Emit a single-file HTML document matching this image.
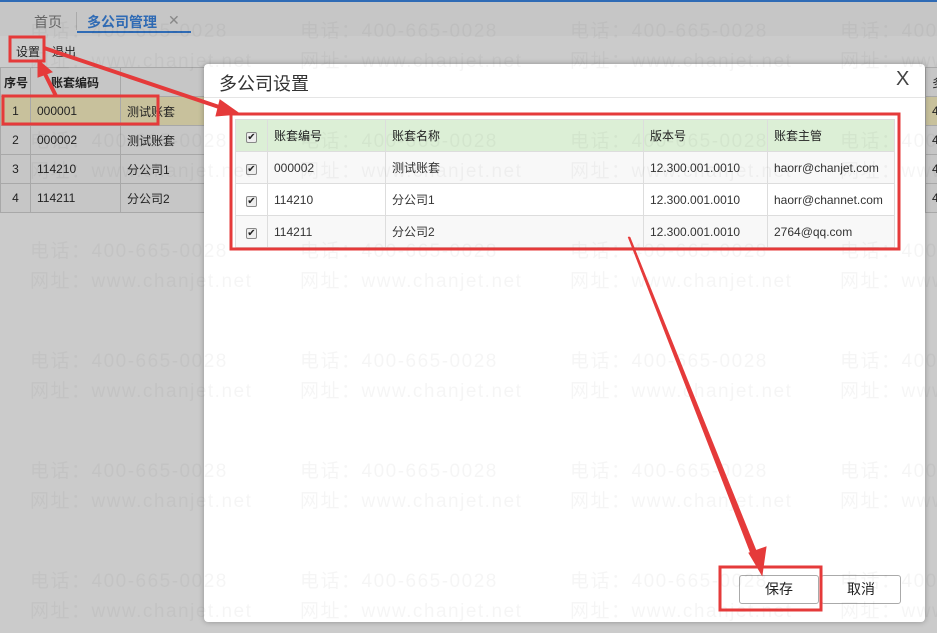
<!DOCTYPE html>
<html><head><meta charset="utf-8"><style>
*{margin:0;padding:0;box-sizing:border-box}
body{width:937px;height:633px;overflow:hidden;background:#cbcbcb;font-family:"Liberation Sans","Noto Sans CJK SC",sans-serif;font-size:12px;color:#222;position:relative}
.abs{position:absolute}
.topbar{left:0;top:0;width:937px;height:36px;background:#c6c6c6;border-top:2px solid #2f6bb5}
.tab{top:12px;font-size:14px;color:#666}
.lt td{border:1px solid #a8a8a8;height:29px;padding-left:6px;font-size:12px;overflow:hidden;white-space:nowrap}
.lt{border-collapse:collapse;position:absolute;left:0;top:67px;background:#c6c6c6;table-layout:fixed;width:1000px}
.modal{left:204px;top:64px;width:721px;height:558px;background:#fff;border-radius:4px;box-shadow:0 0 6px rgba(0,0,0,.3)}
.mt{border-collapse:collapse;position:absolute;left:31px;top:55px;width:660px}
.mt td{border:1px solid #ddd;height:32px;padding-left:6px;font-size:12px;color:#333}
.mt tr.h td{background:#dcefd6;color:#222}
.mt tr:nth-child(even) td{background:#f8f8f8}
.cb{display:inline-block;width:11px;height:11px;border:1px solid #888;border-radius:2px;background:#eee;font-size:10px;line-height:9px;text-align:center;color:#222}
.btn{top:511px;height:29px;border:1px solid #aaa;border-radius:3px;background:#fff;font-size:14px;text-align:center;line-height:27px;color:#222}
.wm{position:absolute;font-size:19px;color:rgba(0,0,0,.04);white-space:nowrap;letter-spacing:1.5px}
</style></head><body>
<div class="abs topbar"></div>
<div class="abs tab" style="left:34px">首页</div>
<div class="abs" style="left:76px;top:12px;width:1px;height:18px;background:#aaa"></div>
<div class="abs tab" style="left:87px;color:#2f6bb5;font-weight:bold">多公司管理</div>
<div class="abs tab" style="left:168px;color:#888">✕</div>
<div class="abs" style="left:77px;top:31px;width:114px;height:2px;background:#2f6bb5"></div>
<div class="abs" style="left:16px;top:43px;font-size:12px">设置</div>
<div class="abs" style="left:52px;top:43px;font-size:12px">退出</div>
<table class="lt">
<tr><td style="width:30px;padding-left:3px;font-weight:bold">序号</td><td style="width:90px;font-weight:bold;padding-left:20px">账套编码</td><td style="width:805px"></td><td>多</td></tr>
<tr style="background:#c8c19c"><td style="text-align:center;padding:0">1</td><td>000001</td><td>测试账套</td><td>42</td></tr>
<tr><td style="text-align:center;padding:0">2</td><td>000002</td><td>测试账套</td><td>42</td></tr>
<tr><td style="text-align:center;padding:0">3</td><td>114210</td><td>分公司1</td><td>42</td></tr>
<tr><td style="text-align:center;padding:0">4</td><td>114211</td><td>分公司2</td><td>42</td></tr>
</table>
<div class="abs modal">
<div class="abs" style="left:15px;top:6px;font-size:18px;color:#333">多公司设置</div>
<div class="abs" style="left:692px;top:4px;font-size:20px;color:#444">X</div>
<div class="abs" style="left:0;top:33px;width:721px;height:1px;background:#e5e5e5"></div>
<table class="mt">
<tr class="h"><td style="width:32px;text-align:center;padding:0"><span class="cb">✔</span></td><td style="width:118px">账套编号</td><td style="width:258px">账套名称</td><td style="width:124px">版本号</td><td>账套主管</td></tr>
<tr><td style="text-align:center;padding:0"><span class="cb">✔</span></td><td>000002</td><td>测试账套</td><td>12.300.001.0010</td><td>haorr@chanjet.com</td></tr>
<tr><td style="text-align:center;padding:0"><span class="cb">✔</span></td><td>114210</td><td>分公司1</td><td>12.300.001.0010</td><td>haorr@channet.com</td></tr>
<tr><td style="text-align:center;padding:0"><span class="cb">✔</span></td><td>114211</td><td>分公司2</td><td>12.300.001.0010</td><td>2764@qq.com</td></tr>
</table>
<div class="abs btn" style="left:535px;width:80px">保存</div>
<div class="abs btn" style="left:617px;width:80px">取消</div>
</div>
<div id="wm"></div>
<svg class="abs" style="left:0;top:0" width="937" height="633">
<g fill="none" stroke="#e53a3a" stroke-width="3">
<rect x="10" y="37" width="34" height="24"/>
<rect x="3" y="96" width="155" height="28"/>
<rect x="231" y="114" width="668" height="135"/>
<rect x="720" y="567" width="101" height="43"/>
</g>
<g stroke="#e53a3a" fill="#e53a3a">
<line x1="56" y1="96" x2="44" y2="72" stroke-width="4"/>
<polygon points="38,60 52,72 38,77"/>
<line x1="44" y1="48" x2="222" y2="108" stroke-width="4"/>
<polygon points="240,114 220,100 216,116"/>
<polygon points="628,237 630,237 758,555 752,557" stroke-width="0.5"/>
<polygon points="762,575 749,553 766,547"/>
</g>
</svg>
<script>
var h='';for(var r=0;r<6;r++)for(var c=0;c<4;c++){var x=30+c*270,y=16+r*110;h+='<div class="wm" style="left:'+x+'px;top:'+y+'px">电话：400-665-0028</div><div class="wm" style="left:'+x+'px;top:'+(y+30)+'px">网址：www.chanjet.net</div>';}
document.getElementById('wm').innerHTML=h;
</script>
</body></html>
